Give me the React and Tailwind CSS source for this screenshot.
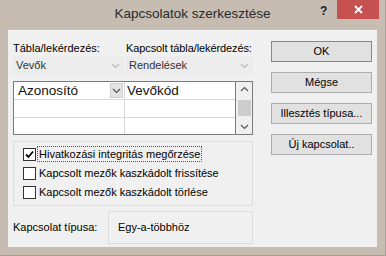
import React from "react";

const font = { fontFamily: '"Liberation Sans", Arial, sans-serif' };

function Chevron({ className = "" }) {
  return (
    <svg width="9" height="6" viewBox="0 0 9 6" className={className}>
      <path d="M1 1 L4.5 4.5 L8 1" fill="none" stroke="currentColor" strokeWidth="1.2" />
    </svg>
  );
}

function ChevronUp({ className = "" }) {
  return (
    <svg width="9" height="6" viewBox="0 0 9 6" className={className}>
      <path d="M1 5 L4.5 1.5 L8 5" fill="none" stroke="currentColor" strokeWidth="1.2" />
    </svg>
  );
}

function Combo({ text, w }) {
  return (
    <div className={`${w} h-[19px] bg-[#ececec] flex items-center justify-between pl-[3px] pr-[4px]`}>
      <span className="text-[11px] text-[#333]">{text}</span>
      <Chevron className="text-[#b8b8b8]" />
    </div>
  );
}

function Check({ checked, label, focus }) {
  return (
    <div className="flex items-center h-[19px]">
      <div className="w-[13px] h-[13px] border border-[#333] bg-white flex items-center justify-center">
        {checked && (
          <svg width="9" height="9" viewBox="0 0 9 9">
            <path d="M1 4.5 L3.5 7 L8 1.5" fill="none" stroke="#000" strokeWidth="1.8" />
          </svg>
        )}
      </div>
      <span
        className={`ml-[1px] px-[1px] text-[11px] leading-[14px] text-[#000] whitespace-nowrap ${
          focus ? "border border-dotted border-[#555]" : "border border-transparent"
        }`}
      >
        {label}
      </span>
    </div>
  );
}

function Btn({ children, def }) {
  return (
    <div
      className={`w-[101px] h-[21px] flex items-center justify-center bg-[#e1e1e1] border ${
        def ? "border-[#3c9ae8]" : "border-[#adadad]"
      } text-[11px] text-[#000] whitespace-nowrap`}
    >
      {children}
    </div>
  );
}

export default function App() {
  return (
    <div className="w-[386px] h-[256px] bg-[#c6bcb2] flex flex-col border-r border-b border-[#a8a098]" style={font}>
      <div className="relative h-[30px] flex items-center justify-center shrink-0">
        <span className="text-[13.5px] text-[#2b2b2b] pb-[1px]">Kapcsolatok szerkesztése</span>
        <span className="absolute left-[320px] top-[2px] text-[12px] font-bold text-[#222]">?</span>
        <div className="absolute left-[337px] top-0 w-[42px] h-[19px] bg-[#c75050] flex items-center justify-center">
          <svg width="9" height="9" viewBox="0 0 9 9">
            <path d="M1 1 L8 8 M8 1 L1 8" stroke="#fff" strokeWidth="1.8" />
          </svg>
        </div>
      </div>
      <div className="ml-[8px] w-[369px] h-[217px] bg-[#f0f0f0] border-t border-[#f8f8f8] flex pl-[5px] pt-[9px] shrink-0">
        <div className="w-[240px] flex flex-col">
          <div className="flex h-[16px] text-[11px] text-[#000] leading-[16px] whitespace-nowrap">
            <span className="w-[113px] shrink-0">Tábla/lekérdezés:</span>
            <span className="tracking-[-0.1px]">Kapcsolt tábla/lekérdezés:</span>
          </div>
          <div className="flex gap-[2px]">
            <Combo text="Vevők" w="w-[111px]" />
            <Combo text="Rendelések" w="w-[127px]" />
          </div>
          <div className="mt-[6px] flex h-[54px]">
            <div className="w-[223px] border border-[#7a7a7a] bg-white flex flex-col">
              <div className="flex h-[18px] border-b border-[#d8d8d8]">
                <div className="w-[111px] border-r border-[#d8d8d8] flex items-center justify-between pl-[4px] pr-[1px]">
                  <span className="text-[13.5px] text-[#111] leading-[16px]">Azonosító</span>
                  <div className="w-[13px] h-[15px] bg-[#e3e3e3] border border-[#d0d0d0] flex items-center justify-center">
                    <Chevron className="text-[#555]" />
                  </div>
                </div>
                <div className="flex-1 flex items-center pl-[2px]">
                  <span className="text-[13.5px] text-[#111] leading-[16px]">Vevőkód</span>
                </div>
              </div>
              <div className="flex h-[18px] border-b border-[#d8d8d8]">
                <div className="w-[111px] border-r border-[#d8d8d8]" />
              </div>
              <div className="flex flex-1">
                <div className="w-[111px] border-r border-[#d8d8d8]" />
              </div>
            </div>
            <div className="w-[17px] border-y border-r border-[#7a7a7a] bg-[#f0f0f0] flex flex-col items-center justify-between py-[4px]">
              <ChevronUp className="text-[#555]" />
              <div className="w-[13px] h-[16px] bg-[#cdcdcd]" />
              <Chevron className="text-[#555]" />
            </div>
          </div>
          <div className="mt-[6px] h-[65px] border border-[#dcdcdc] flex flex-col justify-center pl-[9px] pb-[1px]">
            <Check checked focus label="Hivatkozási integritás megőrzése" />
            <Check label="Kapcsolt mezők kaszkádolt frissítése" />
            <Check label="Kapcsolt mezők kaszkádolt törlése" />
          </div>
          <div className="mt-[5px] flex items-center h-[33px]">
            <span className="w-[95px] text-[11px] text-[#000] whitespace-nowrap">Kapcsolat típusa:</span>
            <div className="flex-1 h-[33px] border border-[#dcdcdc] flex items-center pl-[9px] text-[11px] text-[#000]">
              Egy-a-többhöz
            </div>
          </div>
        </div>
        <div className="ml-[18px] pt-[1px] flex flex-col gap-[10px]">
          <Btn def>OK</Btn>
          <Btn>Mégse</Btn>
          <Btn>Illesztés típusa...</Btn>
          <Btn>Új kapcsolat..</Btn>
        </div>
      </div>
    </div>
  );
}
